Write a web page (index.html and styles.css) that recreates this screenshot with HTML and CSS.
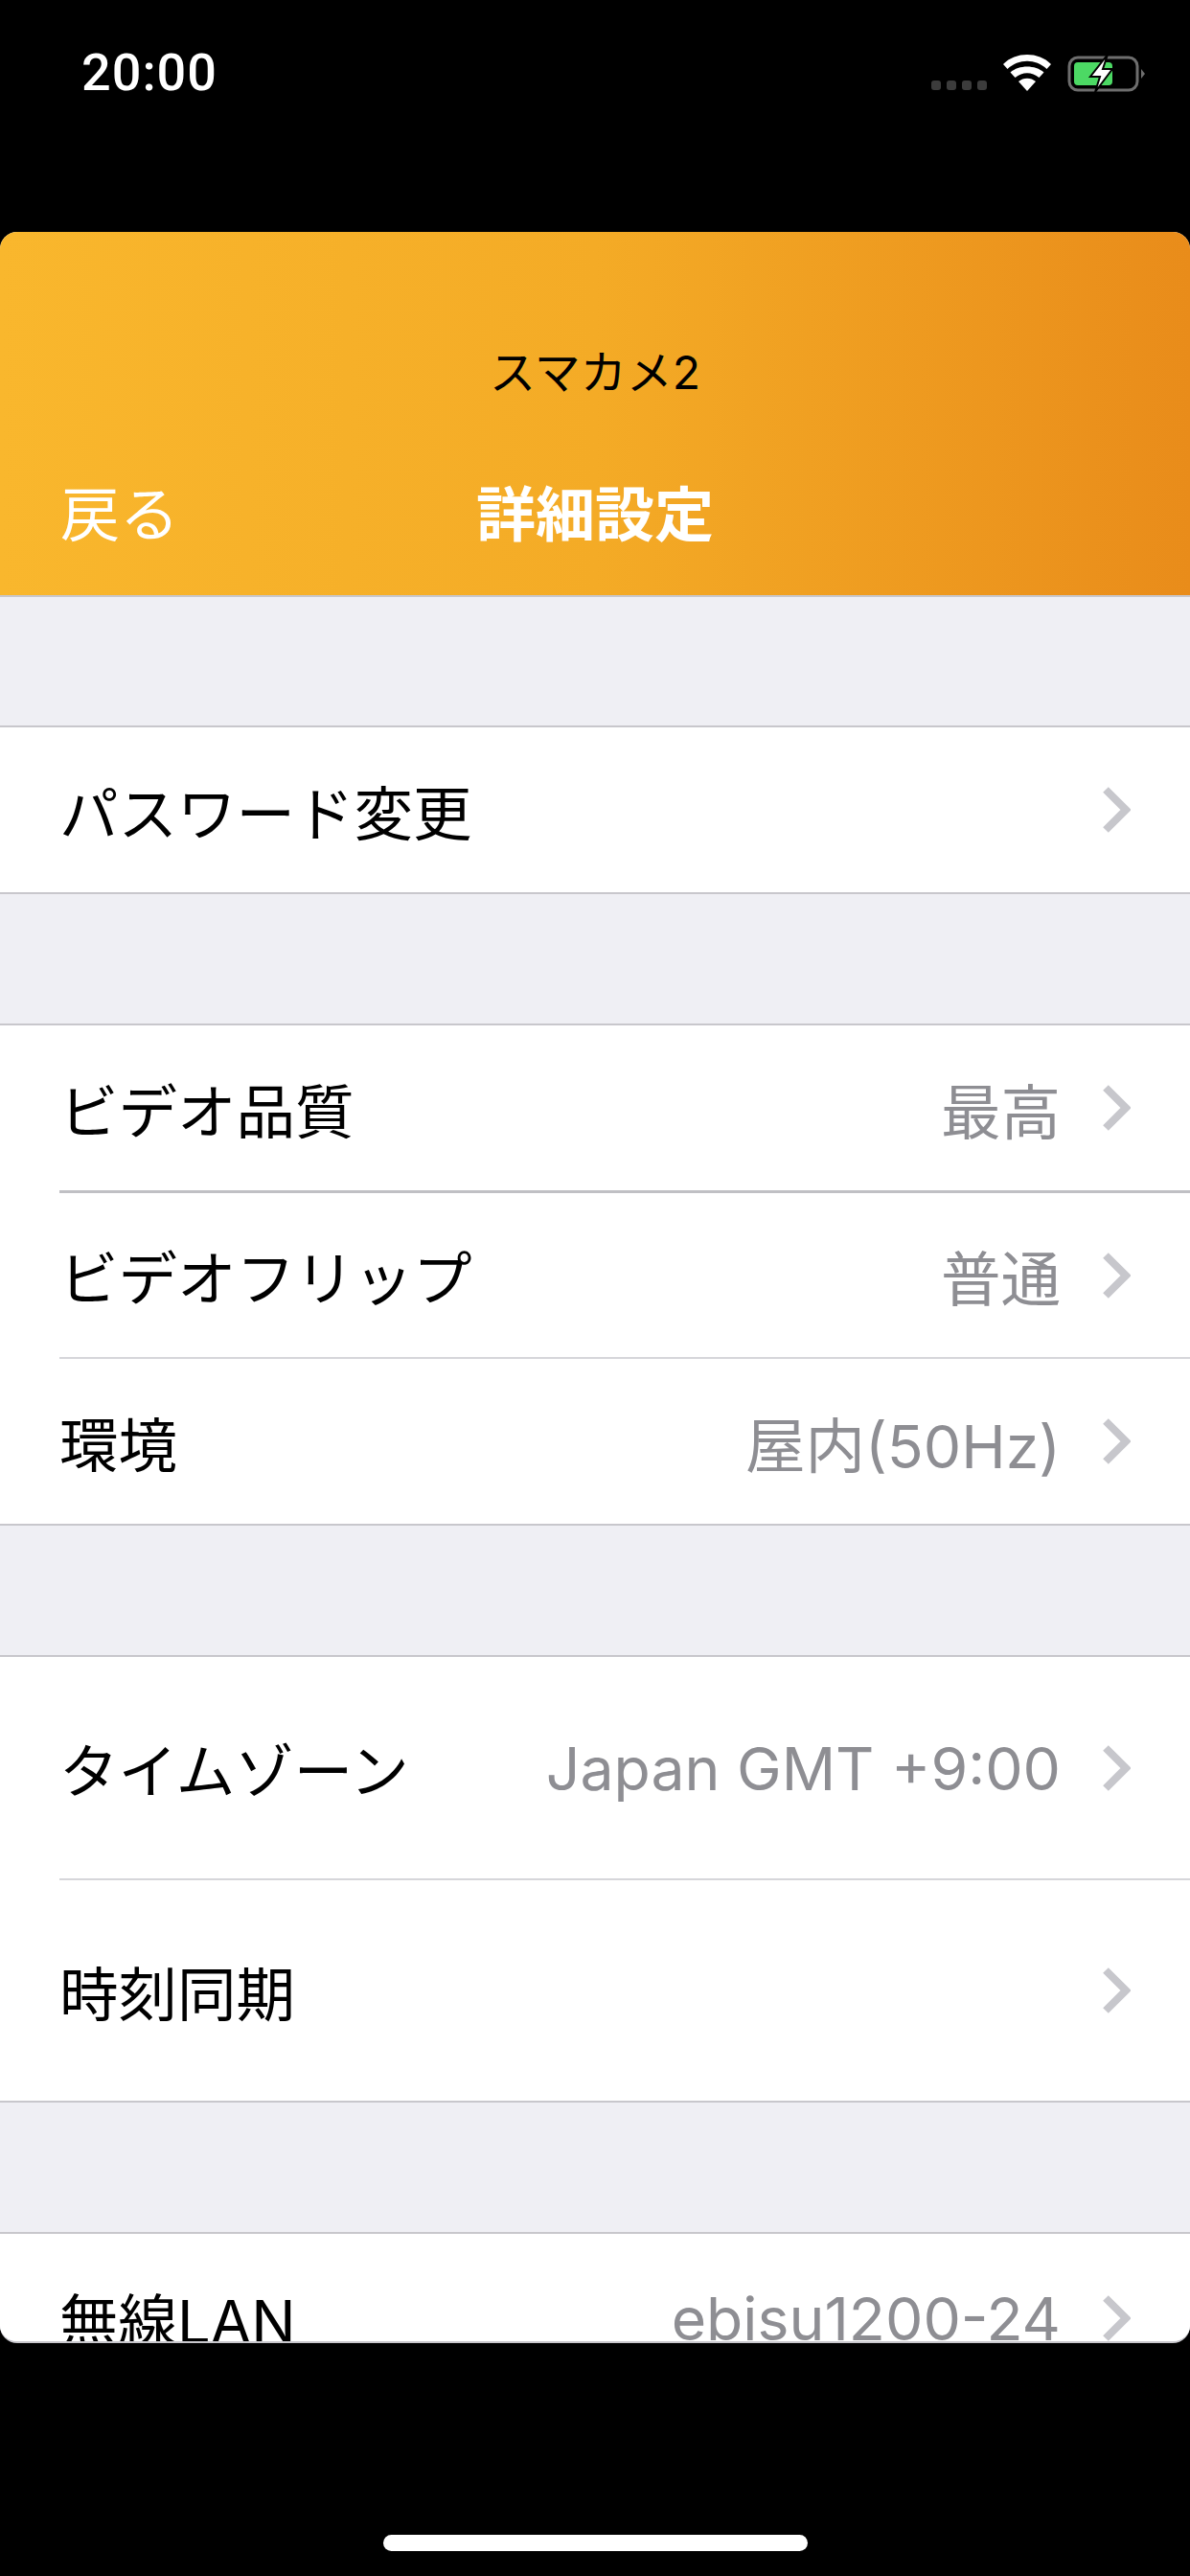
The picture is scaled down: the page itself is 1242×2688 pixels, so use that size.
FILE: index.html
```html
<!DOCTYPE html>
<html lang="ja">
<head>
    <meta charset="UTF-8">
    <title>詳細設定</title>
    <link rel="stylesheet" href="styles.css">
</head>
<body>

<svg class="defs" width="0" height="0">
    <symbol id="chevron" viewBox="0 0 30 50">
        <path d="M4 4 L25 25 L4 46" fill="none" stroke="#c7c7cc" stroke-width="8"/>
    </symbol>
</svg>

<div class="status-bar">
    <span class="clock">20:00</span>
    <div class="status-icons">
        <div class="signal">
            <span class="dot"></span><span class="dot"></span><span class="dot"></span><span class="dot"></span>
        </div>
        <svg class="wifi" viewBox="0 0 50 38">
            <path d="M25 38 L16 28 C21 23.500 29 23.500 34 28 Z" fill="#fff"/>
            <path d="M12.500 24 L7.500 18.500 C16.500 10.500 33.500 10.500 42.500 18.500 L37.500 24 C30 17.500 20 17.500 12.500 24 Z" fill="#fff"/>
            <path d="M4.500 15 L0 10 C13 -3.300 37 -3.300 50 10 L45.500 15 C34 4 16 4 4.500 15 Z" fill="#fff"/>
        </svg>
        <svg class="battery" viewBox="0 0 82 40">
            <rect x="2" y="3" width="71" height="34" rx="9" fill="none" stroke="#6e6e6e" stroke-width="3"/>
            <path d="M77 15 L81 20 L77 25 Z" fill="#6e6e6e"/>
            <rect x="7" y="8" width="40" height="24" rx="4" fill="#4cd964"/>
            <path d="M42 0 L24 23 L34 23 L29 39 L47 15 L37 15 Z" fill="#fff" stroke="#000" stroke-width="2"/>
        </svg>
    </div>
</div>

<div class="screen">
    <header class="app-header">
        <div class="device-name">スマカメ2</div>
        <div class="nav-bar">
            <span class="nav-back">戻る</span>
            <span class="nav-title">詳細設定</span>
            <span></span>
        </div>
    </header>

    <div class="settings">
        <div class="group">
            <div class="row">
                <div class="row-body">
                    <span class="row-label">パスワード変更</span>
                    <svg class="chevron"><use href="#chevron"/></svg>
                </div>
            </div>
        </div>

        <div class="group">
            <div class="row">
                <div class="row-body">
                    <span class="row-label">ビデオ品質</span>
                    <span class="row-value">最高</span>
                    <svg class="chevron"><use href="#chevron"/></svg>
                </div>
            </div>
            <div class="row">
                <div class="row-body heavy-line">
                    <span class="row-label">ビデオフリップ</span>
                    <span class="row-value">普通</span>
                    <svg class="chevron"><use href="#chevron"/></svg>
                </div>
            </div>
            <div class="row">
                <div class="row-body">
                    <span class="row-label">環境</span>
                    <span class="row-value">屋内(50Hz)</span>
                    <svg class="chevron"><use href="#chevron"/></svg>
                </div>
            </div>
        </div>

        <div class="group">
            <div class="row tall">
                <div class="row-body">
                    <span class="row-label">タイムゾーン</span>
                    <span class="row-value">Japan GMT +9:00</span>
                    <svg class="chevron"><use href="#chevron"/></svg>
                </div>
            </div>
            <div class="row tall">
                <div class="row-body">
                    <span class="row-label">時刻同期</span>
                    <svg class="chevron"><use href="#chevron"/></svg>
                </div>
            </div>
        </div>

        <div class="group">
            <div class="row last">
                <div class="row-body">
                    <span class="row-label">無線LAN</span>
                    <span class="row-value">ebisu1200-24</span>
                    <svg class="chevron"><use href="#chevron"/></svg>
                </div>
            </div>
        </div>
    </div>
</div>

<div class="home-area">
    <div class="home-indicator"></div>
</div>

</body>
</html>
```

FILE: styles.css
```css
body {
    margin: 0;
    background-color: #000;
    font-family: Inter, "Noto Sans CJK JP", sans-serif;
    height: 2688px;
    overflow: hidden;
}
.defs {
    display: block;
    height: 0;
}
.status-bar {
    height: 242px;
    box-sizing: border-box;
    padding: 48px 46px 0 85px;
    display: flex;
    justify-content: space-between;
    align-items: flex-start;
}
.clock {
    color: #fff;
    font-family: Roboto, sans-serif;
    font-size: 54px;
    font-weight: 500;
    letter-spacing: 1px;
    line-height: 56px;
}
.status-icons {
    display: flex;
    align-items: flex-start;
    margin-top: 9px;
}
.signal {
    display: flex;
    gap: 6px;
    margin: 27px 17px 0 0;
}
.dot {
    width: 10px;
    height: 10px;
    border-radius: 3px;
    background-color: #3c3c3c;
}
.wifi {
    width: 50px;
    height: 38px;
    margin-right: 17px;
}
.battery {
    width: 82px;
    height: 40px;
}
.screen {
    height: 2203px;
    background-color: #efeff4;
    border-radius: 18px;
    border-bottom: 2px solid #c8c7cc;
    box-sizing: border-box;
    overflow: hidden;
}
.app-header {
    height: 381px;
    box-sizing: border-box;
    padding-top: 116px;
    background: linear-gradient(to right, #f9b72d, #f4ab26 50%, #e98c1a);
    border-bottom: 2px solid #c8c7cc;
}
.device-name {
    text-align: center;
    font-size: 48px;
    line-height: 62px;
    color: #000;
}
.nav-bar {
    display: grid;
    grid-template-columns: 1fr auto 1fr;
    align-items: center;
    margin-top: 76px;
    padding: 0 63px;
    color: #fff;
    font-size: 62px;
    line-height: 84px;
}
.nav-title {
    font-weight: bold;
}
.settings {
    padding-top: 134px;
}
.group {
    background-color: #fff;
    border-top: 2px solid #c8c7cc;
    border-bottom: 2px solid #c8c7cc;
    margin-bottom: 135px;
}
.row {
    height: 172px;
    padding-left: 62px;
}
.row + .row {
    height: 174px;
}
.row.tall {
    height: 231px;
}
.row + .row.tall {
    height: 232px;
}
.row.last {
    height: 175px;
}
.row-body {
    height: 100%;
    box-sizing: border-box;
    display: flex;
    align-items: center;
    padding-right: 62px;
}
.row + .row .row-body {
    border-top: 2px solid #d6d6da;
}
.row + .row .row-body.heavy-line {
    border-top: 3px solid #c0c0c4;
}
.row-label {
    flex: 1;
    font-size: 61.5px;
    color: #000;
}
.row-value {
    font-size: 62.5px;
    color: #8e8e93;
}
.chevron {
    width: 30px;
    height: 50px;
    margin-left: 43px;
}
.home-area {
    height: 243px;
    box-sizing: border-box;
    padding-top: 200px;
    display: flex;
    justify-content: center;
}
.home-indicator {
    width: 443px;
    height: 17px;
    border-radius: 9px;
    background-color: #fff;
}
```
